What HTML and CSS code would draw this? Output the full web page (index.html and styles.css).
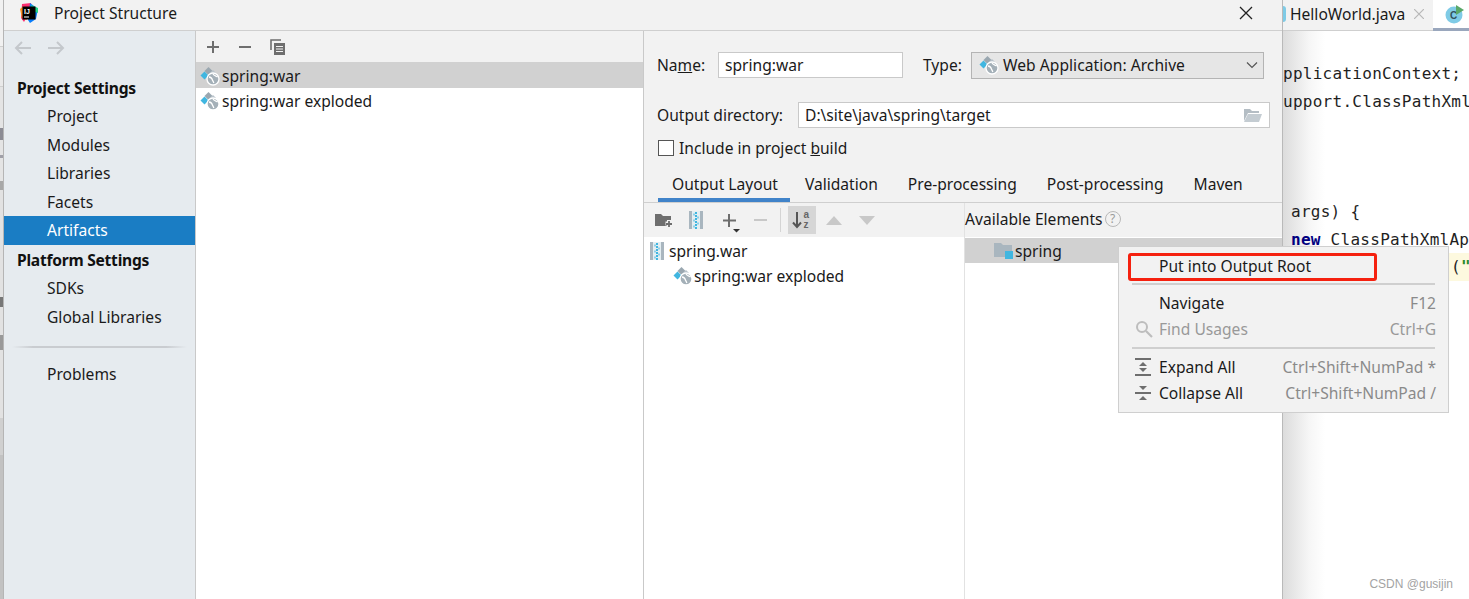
FILE: index.html
```html
<!DOCTYPE html>
<html lang="en">
<head>
<meta charset="utf-8">
<title>Project Structure</title>
<link rel="stylesheet" href="styles.css">
</head>
<body>
<svg class="defs" width="0" height="0" aria-hidden="true">
  <symbol id="web" viewBox="0 0 20 20">
    <path d="M8.500 1l4 4-4 4-4-4z" fill="#9aa7b0"/>
    <path d="M4.500 5.500l4 4-4 4-4-4z" fill="#40b6e0"/>
    <path d="M13 4l3 3-2.500 2.500-3-3z" fill="#b8c2ca"/>
    <circle cx="13" cy="13" r="6" fill="#a4b0b8" stroke="#fff" stroke-width="1.300"/>
    <path d="M9 11c2.200.2 2.900 1.100 3.300 2.700.3 1.100 1.100 1.500 1.500 3.300M13 8c.7 1.500 2.200 1.800 4.700 2.900" fill="none" stroke="#fff" stroke-width="1.300"/>
  </symbol>
  <symbol id="jar" viewBox="0 0 14 18">
    <rect x="0" y="0" width="14" height="18" fill="#a9b6bf"/>
    <rect x="3" y="0" width="8" height="18" fill="#e4eef2"/>
    <path d="M6 1h2v2H6zM6 4h2v2H6zM6 7h2v2H6zM6 10h2v2H6zM6 13h2v2H6zM6 16h2v2H6z" fill="#40b6e0"/>
    <path d="M4 2.500h2v2H4zM8 5.500h2v2H8zM4 8.500h2v2H4zM8 11.500h2v2H8zM4 14.500h2v2H4z" fill="#8fd0e8"/>
  </symbol>
</svg>
<div class="page">
  <div class="strip"></div>

  <div class="dialog">
    <header class="titlebar">
      <svg class="logo" width="20" height="20" viewBox="0 0 20 20">
        <path d="M3 1l9-1 1 5-8 14-3-4z" fill="#fc2f70"/>
        <path d="M1 6l4-3 3 14-5-2z" fill="#ff8f1f"/>
        <path d="M11 0l8 6-2 10-6 4-2-3z" fill="#087cfa"/>
        <path d="M12 2l7 3v5l-5-2z" fill="#21d789"/>
        <rect x="3.500" y="3.500" width="13" height="13" fill="#000"/>
        <text x="5" y="10.500" class="logo-text">IJ</text>
        <rect x="5" y="13.500" width="5" height="1" fill="#fff"/>
      </svg>
      <span class="title">Project Structure</span>
      <svg class="close" width="14" height="14" viewBox="0 0 14 14"><path d="M1 1l12 12M13 1L1 13" stroke="#222" stroke-width="1.300" fill="none"/></svg>
    </header>

    <div class="dialog-body">
      <nav class="sidebar">
        <div class="nav-arrows">
          <svg width="18" height="14" viewBox="0 0 18 14"><path d="M17 7H2M8 1L2 7l6 6" stroke="#c4c8cc" stroke-width="2" fill="none"/></svg>
          <svg width="18" height="14" viewBox="0 0 18 14"><path d="M1 7h15M10 1l6 6-6 6" stroke="#c4c8cc" stroke-width="2" fill="none"/></svg>
        </div>
        <div class="nav-head first">Project Settings</div>
        <a class="nav-item">Project</a>
        <a class="nav-item">Modules</a>
        <a class="nav-item">Libraries</a>
        <a class="nav-item">Facets</a>
        <a class="nav-item selected">Artifacts</a>
        <div class="nav-head second">Platform Settings</div>
        <a class="nav-item tight">SDKs</a>
        <a class="nav-item">Global Libraries</a>
        <div class="nav-sep"></div>
        <a class="nav-item">Problems</a>
      </nav>

      <section class="artifacts">
        <div class="list-tools">
          <svg width="14" height="14" viewBox="0 0 14 14"><path d="M7 1v12M1 7h12" stroke="#6e6e6e" stroke-width="2"/></svg>
          <svg width="14" height="14" viewBox="0 0 14 14"><path d="M1 7h12" stroke="#6e6e6e" stroke-width="2"/></svg>
          <svg width="16" height="16" viewBox="0 0 16 16"><path d="M1 11V1h10" fill="none" stroke="#6e6e6e" stroke-width="1.600"/><rect x="4" y="4" width="11" height="12" fill="#6e6e6e"/><path d="M6 7.500h7M6 10h7M6 12.500h7" stroke="#f2f2f2"/></svg>
        </div>
        <div class="list-row selected"><svg class="ic"><use href="#web"/></svg><span>spring:war</span></div>
        <div class="list-row"><svg class="ic"><use href="#web"/></svg><span>spring:war exploded</span></div>
      </section>

      <section class="panel">
        <div class="form-row name-row">
          <label class="lbl name-lbl">Na<u>m</u>e:</label>
          <div class="input name-input">spring:war</div>
          <label class="lbl type-lbl">Type:</label>
          <div class="select">
            <svg class="ic"><use href="#web"/></svg>
            <span>Web Application: Archive</span>
            <svg class="chev" width="12" height="8" viewBox="0 0 12 8"><path d="M1 1.500l5 5 5-5" fill="none" stroke="#555" stroke-width="1.200"/></svg>
          </div>
        </div>
        <div class="form-row dir-row">
          <label class="lbl dir-lbl">Output directory:</label>
          <div class="input dir-input">
            <span>D:\site\java\spring\target</span>
            <svg width="20" height="15" viewBox="0 0 20 15"><path d="M1 13V1h6l2 2h7v2H5z" fill="#b4bdc4"/><path d="M5 6h14l-3 8H1z" fill="#c4ccd2"/></svg>
          </div>
        </div>
        <div class="check-row"><span class="checkbox"></span><span>Include in project <u>b</u>uild</span></div>
        <div class="tabs">
          <span class="tab active">Output Layout</span>
          <span class="tab">Validation</span>
          <span class="tab">Pre-processing</span>
          <span class="tab">Post-processing</span>
          <span class="tab">Maven</span>
        </div>
        <div class="layout">
          <div class="col-left">
            <div class="tools">
              <svg class="t-folder" width="18" height="16" viewBox="0 0 18 16"><path d="M0 2h6l2 2h8v10H0z" fill="#6e6e6e"/><path d="M14 8v7M10.500 11.500h7" stroke="#f2f2f2" stroke-width="4"/><path d="M14 9v6M11 12h6" stroke="#6e6e6e" stroke-width="1.800"/></svg>
              <svg class="t-jar" width="14" height="18"><use href="#jar"/></svg>
              <svg class="t-plus" width="22" height="22" viewBox="0 0 22 22"><path d="M8 3v13M2 9.500h13" stroke="#6e6e6e" stroke-width="2"/><path d="M12 18h7l-3.500 3.500z" fill="#333"/></svg>
              <svg class="t-minus" width="14" height="14" viewBox="0 0 14 14"><path d="M1 7h13" stroke="#c8c8c8" stroke-width="2"/></svg>
              <span class="t-sep"></span>
              <span class="t-sort"><svg width="22" height="22" viewBox="0 0 22 22"><path d="M6 3v15M2 13.500L6 18l4-4.500" fill="none" stroke="#555" stroke-width="2"/><text x="12.500" y="9" class="sort-text">a</text><text x="12.500" y="19" class="sort-text">z</text></svg></span>
              <svg class="t-up" width="16" height="9" viewBox="0 0 16 9"><path d="M8 0l8 9H0z" fill="#c8c8c8"/></svg>
              <svg class="t-down" width="16" height="9" viewBox="0 0 16 9"><path d="M0 0h16L8 9z" fill="#c8c8c8"/></svg>
            </div>
            <div class="tree">
              <div class="tree-row"><svg class="ic-jar"><use href="#jar"/></svg><span>spring.war</span></div>
              <div class="tree-row nested"><svg class="ic"><use href="#web"/></svg><span>spring:war exploded</span></div>
            </div>
          </div>
          <div class="col-right">
            <div class="avail"><span>Available Elements</span><span class="help">?</span></div>
            <div class="avail-list">
              <div class="avail-row">
                <svg width="20" height="18" viewBox="0 0 20 18"><path d="M0 1h7l2 2h9v12H0z" fill="#a9b6bf"/><rect x="11" y="9" width="8" height="8" fill="#40b6e0"/></svg>
                <span>spring</span>
              </div>
            </div>
          </div>
        </div>
      </section>
    </div>
  </div>

  <div class="editor">
    <div class="editor-tabs">
      <span class="tab-dot"></span>
      <span class="ed-tab">HelloWorld.java</span>
      <svg class="ed-close" width="10" height="10" viewBox="0 0 10 10"><path d="M0 0l10 10M10 0L0 10" stroke="#b8b8b8" stroke-width="1.200"/></svg>
      <span class="ed-active">
        <svg class="c-ic" width="20" height="20" viewBox="0 0 20 20"><circle cx="9" cy="11" r="8.500" fill="#7fcbe6"/><text x="5" y="15" class="c-text">C</text><path d="M11 1l8 5-8 5z" fill="#59a869"/></svg>
      </span>
    </div>
    <div class="code">
      <div class="ln">pplicationContext;</div>
      <div class="ln">upport.ClassPathXml</div>
      <div class="ln"></div>
      <div class="ln"></div>
      <div class="ln"></div>
      <div class="ln in">args) {</div>
      <div class="ln in"><b class="kw">new</b> ClassPathXmlAp</div>
      <div class="ln hl"><span class="mark">(<i class="str">"</i></span></div>
    </div>
    <div class="watermark">CSDN @gusijin</div>
  </div>

  <div class="menu">
    <div class="m-row"><span class="m-ic"></span><span class="m-label">Put into Output Root</span></div>
    <div class="m-sep first"></div>
    <div class="m-row"><span class="m-ic"></span><span class="m-label">Navigate</span><span class="m-key">F12</span></div>
    <div class="m-row off"><span class="m-ic"><svg width="18" height="18" viewBox="0 0 18 18"><circle cx="7" cy="7" r="5" fill="none" stroke="#bdbdbd" stroke-width="2"/><path d="M11 11l6 6" stroke="#bdbdbd" stroke-width="2.200"/></svg></span><span class="m-label">Find Usages</span><span class="m-key">Ctrl+G</span></div>
    <div class="m-sep"></div>
    <div class="m-row"><span class="m-ic"><svg width="16" height="18" viewBox="0 0 16 18"><path d="M0 1h16M0 17h16" stroke="#6e6e6e" stroke-width="2"/><path d="M8 4l4 4H4zM8 14l4-4H4z" fill="#6e6e6e"/></svg></span><span class="m-label">Expand All</span><span class="m-key">Ctrl+Shift+NumPad *</span></div>
    <div class="m-row"><span class="m-ic"><svg width="16" height="18" viewBox="0 0 16 18"><path d="M0 9h16" stroke="#6e6e6e" stroke-width="2"/><path d="M4 2h8L8 6zM8 12l4 4H4z" fill="#6e6e6e"/></svg></span><span class="m-label">Collapse All</span><span class="m-key">Ctrl+Shift+NumPad /</span></div>
  </div>
  <div class="redbox"></div>
</div>
</body>
</html>
```
FILE: styles.css
```css
* { box-sizing: border-box; }
html, body { margin: 0; padding: 0; background: #fff; }
body { font-family: "Noto Sans", "Open Sans", sans-serif; font-size: 15.6px; color: #1a1a1a; }
.defs { position: absolute; }
.page { position: relative; display: flex; width: 1469px; height: 599px; overflow: hidden; }

.strip {
  width: 4px; flex: none; border-right: 1px solid #b5b5b5;
  background: linear-gradient(#f1f1f1 0 46px, #cfcfcf 46px 47px, #e9e9e9 47px 86px, #cfcfcf 86px 87px, #e4e4e4 87px 128px, #8c8c94 128px 140px, #e4e4e4 140px 155px, #a0a0a8 155px 158px, #e4e4e4 158px 181px, #a8a8a8 181px 190px, #e2e2e2 190px 297px, #777 297px 307px, #e2e2e2 307px 335px, #999 335px 350px, #e2e2e2 350px 418px, #d0d0d0 418px 455px, #c2c2c2 455px);
}

.dialog { width: 1279px; flex: none; display: flex; flex-direction: column; background: #f2f2f2; border-right: 1px solid #b9b9b9; }
.titlebar { height: 31px; flex: none; display: flex; align-items: center; padding: 0 29px 4px 15px; border-bottom: 1px solid #cfcfcf; }
.logo { flex: none; }
.logo-text { font: bold 7px "Liberation Sans", sans-serif; fill: #fff; }
.title { margin-left: 15px; flex: 1; }
.dialog-body { flex: 1; display: flex; min-height: 0; }

.sidebar { width: 192px; flex: none; background: #e6ebef; border-right: 1px solid #c9c9c9; display: flex; flex-direction: column; }
.nav-arrows { height: 43px; display: flex; gap: 15px; align-items: center; padding: 0 0 9px 10px; flex: none; }
.nav-head { font-weight: 700; padding-left: 13px; color: #111; height: 28px; line-height: 28px; flex: none; letter-spacing: -.25px; }
.nav-item { height: 28.600px; line-height: 28.600px; padding-left: 43px; flex: none; }
.nav-item.selected { background: #1a7dc4; color: #fff; }
.nav-item.tight { height: 27px; line-height: 25px; }
.nav-head.second { height: 31px; line-height: 31px; }
.nav-sep { height: 2px; margin: 14px 8px 12px 8px; flex: none; background: linear-gradient(90deg, transparent, #c9ccd0 12%, #c9ccd0 88%, transparent); }

.artifacts { width: 448px; flex: none; background: #fff; border-right: 1px solid #c9c9c9; }
.list-tools { height: 31px; background: #f2f2f2; display: flex; align-items: center; gap: 18px; padding-left: 10px; }
.list-row { height: 25px; display: flex; align-items: center; gap: 2px; padding-left: 4px; }
.list-row.selected { background: #d1d1d1; height: 26px; padding-top: 1px; }
.ic { width: 20px; height: 20px; flex: none; }

.panel { flex: 1; min-width: 0; display: flex; flex-direction: column; }
.form-row { display: flex; align-items: center; flex: none; }
.name-row { margin-top: 21px; height: 26px; padding-left: 13px; }
.lbl { flex: none; white-space: nowrap; }
.name-lbl { width: 47px; }
.input { height: 26px; background: #fff; border: 1px solid #c9c9c9; padding-left: 6px; line-height: 24px; flex: none; }
.name-input { width: 185px; margin-left: 14px; }
.type-lbl { margin-left: 20px; width: 40px; }
.select { width: 293px; height: 27px; margin-left: 8px; background: #e6e6e6; border: 1px solid #b4b4b4; display: flex; align-items: center; padding-left: 7px; gap: 4px; flex: none; letter-spacing: .04px; }
.select span { flex: 1; }
.chev { margin-right: 5px; flex: none; }
.dir-row { margin-top: 24px; height: 26px; padding-left: 13px; }
.dir-lbl { width: 128px; }
.dir-input { width: 472px; margin-left: 13px; display: flex; align-items: center; justify-content: space-between; padding-right: 6px; }
.check-row { margin-top: 9px; height: 22px; display: flex; align-items: center; padding-left: 14px; gap: 5px; flex: none; }
.checkbox { width: 16px; height: 16px; border: 1px solid #555; background: #fff; flex: none; }
.tabs { margin-top: 10px; height: 34px; display: flex; padding-left: 13.500px; border-bottom: 1px solid #cfcfcf; flex: none; }
.tab { padding: 4px 15px 0; height: 33px; white-space: nowrap; }
.tab.active { border-bottom: 4px solid #4083c9; padding: 4px 12px 0 14.500px; }
.layout { flex: 1; display: flex; min-height: 0; }
.col-left { width: 321px; flex: none; background: #fff; border-right: 1px solid #e2e2e2; display: flex; flex-direction: column; }
.col-right { flex: 1; min-width: 0; background: #fff; }
.tools { height: 34px; flex: none; background: #f2f2f2; display: flex; align-items: center; padding-left: 11px; }
.t-jar { margin-left: 16px; }
.t-plus { margin-left: 18px; margin-top: 4px; }
.t-minus { margin-left: 10px; }
.t-sep { width: 1px; height: 24px; background: #d4d4d4; margin-left: 13px; }
.t-sort { width: 28px; height: 28px; background: #d6d6d6; margin-left: 7px; display: flex; align-items: center; justify-content: center; }
.sort-text { font: bold 10px "Liberation Sans", sans-serif; fill: #666; }
.t-up { margin-left: 10px; }
.t-down { margin-left: 17px; }
.tree { flex: 1; padding-top: 1px; }
.tree-row { height: 25px; display: flex; align-items: center; gap: 5px; padding-left: 6px; }
.tree-row.nested { padding-left: 29px; gap: 1px; }
.ic-jar { width: 14px; height: 18px; flex: none; }
.avail { height: 34px; background: #f2f2f2; display: flex; align-items: center; gap: 2px; padding-bottom: 2px; }
.help { width: 16px; height: 16px; border: 1.500px solid #b8b8b8; border-radius: 50%; color: #9a9a9a; font-size: 12px; line-height: 13px; text-align: center; }
.avail-row { height: 25px; background: #d1d1d1; margin-top: 1px; display: flex; align-items: center; padding-left: 29px; gap: 1px; }

.editor { flex: 1; min-width: 0; position: relative; background: linear-gradient(90deg, #dcdcdc, #f6f6f6 26px, #fff 42px); }
.editor-tabs { height: 31px; display: flex; align-items: center; border-bottom: 1px solid #cfcfcf; background: #f2f2f2; padding-bottom: 2px; }
.tab-dot { width: 3px; height: 16px; background: #7fcbe6; border-radius: 0 3px 3px 0; flex: none; }
.ed-tab { margin-left: 4px; flex: none; }
.ed-close { margin-left: 9px; flex: none; }
.ed-active { margin-left: 9px; flex: 1; height: 31px; background: #fff; border-bottom: 3px solid #9aa7bd; display: flex; align-items: center; padding-left: 12px; overflow: hidden; margin-bottom: -3px; }
.c-ic { flex: none; }
.c-text { font: bold 10px "Liberation Sans", sans-serif; fill: #33515c; }
.code { padding-top: 29px; font-family: "DejaVu Sans Mono", monospace; font-size: 16px; letter-spacing: .27px; white-space: nowrap; overflow: hidden; }
.ln { height: 27.600px; line-height: 27.600px; color: #1f1f1f; }
.ln.in { padding-left: 8px; }
.ln.hl { padding-left: 166px; }
.mark { display: inline-block; background: #fdf9df; height: 28px; padding: 0 8px 0 2px; }
.str { color: #2b8a2b; font-style: normal; font-weight: 700; }
.kw { color: #000080; font-weight: 700; }
.watermark { position: absolute; right: 16px; bottom: 8px; color: #a3a3a3; font: 12px "Liberation Sans", sans-serif; }

.menu { position: absolute; left: 1118px; top: 246px; width: 331px; height: 167px; background: #f2f2f2; border: 1px solid #cfcfcf; padding: 6px 12px 0 4px; }
.m-row { height: 26px; display: flex; align-items: center; }
.m-ic { width: 36px; flex: none; display: flex; padding-left: 12px; }
.m-label { flex: 1; }
.m-key { color: #8a8a8a; }
.off .m-label, .off .m-key { color: #999; }
.m-sep { height: 2px; background: #cfcfcf; margin: 5px 1px 5px 9px; }
.m-sep.first { margin-top: 4px; }
.redbox { position: absolute; left: 1128px; top: 253px; width: 249px; height: 28px; border: 3px solid #f5210f; border-radius: 3px; }
```
